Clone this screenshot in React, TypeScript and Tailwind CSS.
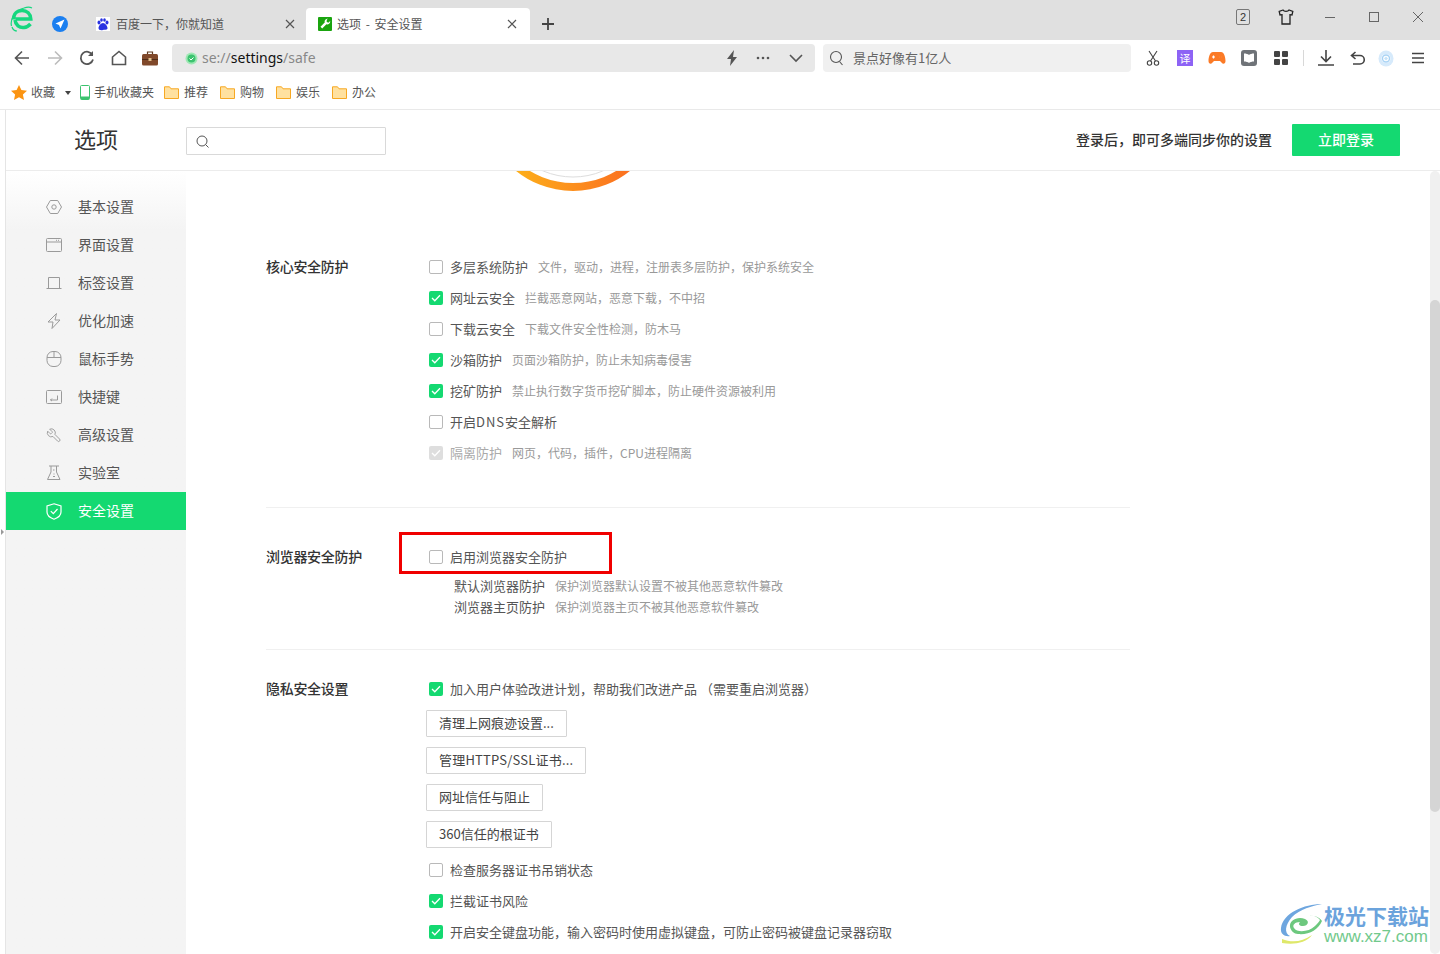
import React from "react";

const GREEN = "bg-[#14d971]";

function Check({ state }: { state: "off" | "on" | "dis" }) {
  if (state === "off")
    return <span className="block w-[14px] h-[14px] shrink-0 rounded-[2px] border border-[#b9b9b9] bg-white" />;
  return (
    <span className={`flex items-center justify-center w-[14px] h-[14px] shrink-0 rounded-[2px] ${state === "on" ? GREEN : "bg-[#dedede]"}`}>
      <svg width="10" height="8" viewBox="0 0 10 8" fill="none">
        <path d="M1 4 L3.8 6.8 L9 1.2" stroke="white" strokeWidth="1.3" />
      </svg>
    </span>
  );
}

function Row({ state, label, desc, dim }: { state: "off" | "on" | "dis"; label: React.ReactNode; desc?: string; dim?: boolean }) {
  return (
    <div className="flex items-center h-[31px]">
      <div className="w-[21px] pb-[1px] flex justify-start"><Check state={state} /></div>
      <span className={`pb-[2px] text-[13px] whitespace-nowrap ${dim ? "text-[#aaaaaa]" : "text-[#555555]"}`}>{label}</span>
      {desc && <span className="pb-[2px] ml-[10px] text-[12px] whitespace-nowrap text-[#999999]">{desc}</span>}
    </div>
  );
}

function Btn({ children }: { children: React.ReactNode }) {
  return (
    <div className="flex items-center w-fit h-[27px] px-[12px] pb-[2px] border border-[#d5d5d5] rounded-[1px] text-[13px] text-[#444444] whitespace-nowrap bg-white mb-[10px] -ml-[3px]">
      {children}
    </div>
  );
}

function SectionLabel({ children }: { children: React.ReactNode }) {
  return (
    <div className="w-[163px] shrink-0 h-[31px] flex items-center pb-[2px] text-[14px] tracking-[-0.3px] font-medium text-[#333333]">
      {children}
    </div>
  );
}

const S = { fill: "none", stroke: "#9a9a9a", strokeWidth: 1 };

const sideIcons: Record<string, React.ReactNode> = {
  a: <svg width="16" height="16" viewBox="0 0 16 16" {...S}><path d="M4.3 1.500h7.400L15.500 8l-3.800 6.500H4.300L.5 8z" /><circle cx="8" cy="8" r="2.200" /></svg>,
  b: <svg width="16" height="16" viewBox="0 0 16 16" {...S}><rect x=".5" y="1.500" width="15" height="13" rx="1" /><path d="M.5 5h15M10 3.300h1M12 3.300h1" /></svg>,
  c: <svg width="16" height="16" viewBox="0 0 16 16" {...S}><path d="M2.500 13V2.500h11V13M.5 13.500h15" /></svg>,
  d: <svg width="16" height="16" viewBox="0 0 16 16" {...S}><path d="M10.500 .5 2 9h5l-1 6.500L14 7H9z" /></svg>,
  e: <svg width="16" height="16" viewBox="0 0 16 16" {...S}><rect x="1" y=".5" width="14" height="15" rx="6" /><path d="M1 6.500h14M8 .5v6" /></svg>,
  f: <svg width="16" height="16" viewBox="0 0 16 16" {...S}><rect x=".5" y="1.500" width="15" height="13" rx="1" /><path d="M11.500 6.500v4.500H4.500M6 9.500 4.500 11 6 12" /></svg>,
  g: (
    <svg width="17" height="17" viewBox="0 0 24 24" fill="none" stroke="#9a9a9a" strokeWidth="1.400">
      <path transform="translate(24 0) scale(-1 1)" d="M14.700 6.300a1 1 0 0 0 0 1.400l1.600 1.600a1 1 0 0 0 1.400 0l3.770-3.770a6 6 0 0 1-7.940 7.940l-6.910 6.910a2.120 2.120 0 0 1-3-3l6.910-6.910a6 6 0 0 1 7.940-7.940l-3.760 3.760z" />
    </svg>
  ),
  h: <svg width="16" height="16" viewBox="0 0 16 16" {...S}><path d="M3 1h10M5 1v6L1.500 14.500h12.500L10.500 7V1M7 5h1.500M7.500 9h1M7 11.500h2" /></svg>,
  i: <svg width="16" height="17" viewBox="0 0 16 17" fill="none" stroke="white" strokeWidth="1.200"><path d="M8 .8 15 3v6c0 3.500-3.500 6-7 7.200C4.500 15 1 12.500 1 9V3z" /><path d="M4.800 8.200 7.300 10.700 11.500 6" /></svg>,
};

const sideItems: [string, string][] = [
  ["a", "基本设置"], ["b", "界面设置"], ["c", "标签设置"], ["d", "优化加速"], ["e", "鼠标手势"],
  ["f", "快捷键"], ["g", "高级设置"], ["h", "实验室"], ["i", "安全设置"],
];

function Folder() {
  return (
    <svg width="15" height="13" viewBox="0 0 15 13" className="shrink-0">
      <path d="M.5 12.500V.8h5l1.500 2h7.500v9.700z" fill="#ffe1a0" stroke="#f7a823" />
    </svg>
  );
}

function Bookmark({ label }: { label: string }) {
  return (
    <div className="flex items-center gap-[5px] w-[56px]">
      <Folder />
      <span className="pb-[2px] text-[12px] text-[#555555]">{label}</span>
    </div>
  );
}

const dk = { fill: "none", stroke: "#555555", strokeWidth: 1.6 };

export default function App() {
  return (
    <div className="relative w-[1440px] h-[954px] overflow-hidden bg-white font-['Noto_Sans_CJK_SC','Noto_Sans',sans-serif] flex flex-col">
      {/* Tab strip */}
      <div className="h-[40px] shrink-0 bg-[#e0e0e0] flex items-end">
        <div className="w-[80px] h-full relative flex items-center shrink-0">
          <svg width="24" height="26" viewBox="0 0 24 26" className="ml-[10px] mb-[3px]">
            <path d="M3.500 13.500C3.500 8 7 4.500 12 4.500c5 0 8.500 3.500 8.800 8.500H5.500" fill="none" stroke="#16d77f" strokeWidth="3.500" />
            <path d="M5 14c.5 5 4.500 8 9 7.500 3-.3 5-1.800 6.500-3.500" fill="none" stroke="#16d77f" strokeWidth="3.500" />
            <path d="M1.500 20C0 14 4 5 14 2c3-1 6-1 8 0" fill="none" stroke="#16d77f" strokeWidth="1.200" />
            <path d="M2 21c1 3 3 4 5 4" fill="none" stroke="#16d77f" strokeWidth="1.200" />
          </svg>
          <svg width="16" height="16" viewBox="0 0 16 16" className="ml-[18px] mt-[8px] shrink-0">
            <circle cx="8" cy="8" r="8" fill="#1b7ff0" />
            <path d="M12.500 3.500 3.500 7.500 7 9l1.500 3.500z" fill="white" />
          </svg>
        </div>
        <div className="w-[226px] h-[32px] flex items-center pl-[16px] relative">
          <svg width="14" height="14" viewBox="0 0 14 14" className="shrink-0">
            <rect width="14" height="14" fill="white" />
            <g fill="#2932e1">
              <ellipse cx="3" cy="5.500" rx="1.500" ry="2" /><ellipse cx="5.500" cy="3" rx="1.300" ry="1.800" />
              <ellipse cx="8.500" cy="3" rx="1.300" ry="1.800" /><ellipse cx="11" cy="5.500" rx="1.500" ry="2" />
              <path d="M7 6c-2 0-4.500 3-4.500 5 0 2 2 2.500 4.500 2s4.500 0 4.500-2c0-2-2.500-5-4.500-5z" />
            </g>
          </svg>
          <span className="ml-[6px] text-[12px] text-[#555555] whitespace-nowrap">百度一下，你就知道</span>
          <svg width="10" height="10" viewBox="0 0 10 10" className="ml-auto mr-[11px]"><path d="M1 1l8 8M9 1l-8 8" stroke="#555555" strokeWidth="1.200" /></svg>
        </div>
        <div className="w-[224px] h-[32px] bg-white rounded-t-[4px] flex items-center pl-[12px]">
          <svg width="14" height="14" viewBox="0 0 14 14" className="shrink-0">
            <rect width="14" height="14" rx="1" fill="#1aa40f" />
            <path d="M10 1.800a3 3 0 0 0-3.300 3.800L2.500 9.800 4.200 11.500l4.200-4.200a3 3 0 0 0 3.800-3.300L10.300 5.800 8.600 4.700l.300-2.300z" fill="white" />
          </svg>
          <span className="ml-[5px] text-[12px] text-[#555555] whitespace-nowrap [word-spacing:2px]">选项 - 安全设置</span>
          <svg width="10" height="10" viewBox="0 0 10 10" className="ml-auto mr-[13px]"><path d="M1 1l8 8M9 1l-8 8" stroke="#555555" strokeWidth="1.200" /></svg>
        </div>
        <div className="h-[32px] flex items-center ml-[11px]">
          <svg width="14" height="14" viewBox="0 0 14 14"><path d="M7 1v12M1 7h12" stroke="#444444" strokeWidth="1.800" /></svg>
        </div>
        <div className="ml-auto h-full flex items-center pb-[6px]">
          <div className="w-[14px] h-[16px] border border-[#777777] rounded-[2px] flex items-center justify-center text-[11px] leading-none text-[#333333] font-['Liberation_Sans',sans-serif]">2</div>
          <svg width="16" height="16" viewBox="0 0 16 16" className="ml-[28px]"><path d="M5 1 1.200 2.500l.8 3.500 2-.3V15h8V5.700l2 .3.800-3.500L11 1c-1 1.800-5 1.800-6 0z" fill="none" stroke="#222222" strokeWidth="1.300" /></svg>
          <svg width="10" height="10" viewBox="0 0 10 10" className="ml-[31px]"><path d="M0 5.500h10" stroke="#666666" /></svg>
          <svg width="10" height="10" viewBox="0 0 10 10" className="ml-[34px]"><rect x=".5" y=".5" width="9" height="9" fill="none" stroke="#666666" /></svg>
          <svg width="12" height="12" viewBox="0 0 12 12" className="ml-[33px] mr-[16px]"><path d="M1 1l10 10M11 1 1 11" stroke="#666666" /></svg>
        </div>
      </div>

      {/* Toolbar */}
      <div className="h-[36px] shrink-0 bg-white flex items-center">
        <div className="w-[172px] shrink-0 flex items-center pl-[14px]">
          <svg width="16" height="16" viewBox="0 0 16 16" {...dk}><path d="M15 8H1.500M8 1.500 1.500 8 8 14.500" /></svg>
          <svg width="16" height="16" viewBox="0 0 16 16" className="ml-[17px]" fill="none" stroke="#bcbcbc" strokeWidth="1.600"><path d="M1 8h13.500M8 1.500 14.500 8 8 14.500" /></svg>
          <svg width="16" height="16" viewBox="0 0 16 16" className="ml-[16px]" {...dk} strokeWidth="1.800"><path d="M13.500 5A6.200 6.200 0 1 0 14 9.500" /><path d="M14 1v5H9" fill="#555555" stroke="none" /></svg>
          <svg width="16" height="16" viewBox="0 0 16 16" className="ml-[16px]" {...dk}><path d="M1.500 14.500V7L8 1.500 14.500 7v7.500z" /></svg>
          <svg width="16" height="15" viewBox="0 0 16 15" className="ml-[15px]">
            <path d="M5.500 3V1h5v2" fill="none" stroke="#5d3a20" strokeWidth="1.200" />
            <rect y="3" width="16" height="11.500" rx="1.500" fill="#80492a" />
            <rect y="8" width="16" height="1" fill="#4d2c18" />
            <rect x="6.500" y="7" width="3" height="3" fill="#e2c08c" />
          </svg>
        </div>
        <div className="w-[643px] h-[28px] bg-[#e8e8e8] rounded-[4px] flex items-center pl-[13px] pr-[12px]">
          <svg width="13" height="13" viewBox="0 0 13 13" className="shrink-0">
            <circle cx="6.500" cy="6.500" r="6" fill="#9ee8b4" /><circle cx="6.500" cy="6.500" r="4" fill="#3cc36f" />
            <path d="M4.500 6.500l1.500 1.500 2.500-2.500" fill="none" stroke="white" />
          </svg>
          <span className="ml-[4px] pb-[1px] text-[14px] leading-none text-[#888888] whitespace-nowrap font-['Noto_Sans',sans-serif]">se://<span className="text-[#111111]">settings</span>/safe</span>
          <svg width="12" height="16" viewBox="0 0 12 16" className="ml-auto"><path d="M8 0 1 9h4l-1 7 7-9H7z" fill="#555555" /></svg>
          <svg width="14" height="4" viewBox="0 0 14 4" className="ml-[18px]"><g fill="#555555"><circle cx="2" cy="2" r="1.300" /><circle cx="7" cy="2" r="1.300" /><circle cx="12" cy="2" r="1.300" /></g></svg>
          <svg width="14" height="9" viewBox="0 0 14 9" className="ml-[19px]" {...dk}><path d="M1 1l6 6 6-6" /></svg>
        </div>
        <div className="ml-[8px] w-[308px] h-[28px] bg-[#f0f0f0] rounded-[4px] flex items-center pl-[6px]">
          <svg width="15" height="16" viewBox="0 0 15 16" fill="none" stroke="#555555" strokeWidth="1.100"><circle cx="7" cy="7" r="5.500" /><path d="M10.500 11.500l3 3.500" /></svg>
          <span className="ml-[9px] text-[13px] text-[#666666] whitespace-nowrap">景点好像有1亿人</span>
        </div>
        <div className="flex items-center ml-[15px]">
          <svg width="14" height="16" viewBox="0 0 14 16" fill="none" stroke="#444444" strokeWidth="1.100"><path d="M3 1l6.500 10M11 1 4.500 11" /><circle cx="3.500" cy="13" r="2.200" /><circle cx="10.500" cy="13" r="2.200" /></svg>
          <div className="ml-[17px] w-[16px] h-[16px] bg-[#8d63f5] flex items-center justify-center text-[11px] leading-none text-white">译</div>
          <svg width="18" height="14" viewBox="0 0 18 14" className="ml-[15px]"><path d="M5 1h8c3 0 4.500 5 4.500 9 0 3-2.500 3.500-4 1.500L12 10H6l-1.500 1.500C3 13.500.5 13 .5 10 .5 6 2 1 5 1z" fill="#fb7a26" /><path d="M4 6h3M5.500 4.500v3M11 6h.1M13.500 6h.1" stroke="white" strokeWidth="1.200" /></svg>
          <svg width="16" height="16" viewBox="0 0 16 16" className="ml-[15px]"><rect width="16" height="16" rx="3" fill="#6f7378" /><path d="M3 3.500c2 0 4 .5 5 1.500 1-1 3-1.500 5-1.500v8c-2 0-4 .5-5 1.500-1-1-3-1.500-5-1.500z" fill="white" /></svg>
          <div className="ml-[17px] grid grid-cols-2 gap-[2px]">
            <span className="w-[6px] h-[6px] bg-[#444444] rounded-[1px]" /><span className="w-[6px] h-[6px] bg-[#444444] rounded-[1px]" />
            <span className="w-[6px] h-[6px] bg-[#444444] rounded-[1px]" /><span className="w-[6px] h-[6px] bg-[#444444] rounded-[1px]" />
          </div>
          <span className="ml-[15px] w-px h-[16px] bg-[#d8d8d8]" />
          <svg width="16" height="16" viewBox="0 0 16 16" className="ml-[14px]" {...dk} stroke="#444444"><path d="M8 0v11M3 6.500 8 11.500l5-5M0 15h16" /></svg>
          <svg width="15" height="15" viewBox="0 0 15 15" className="ml-[16px]" {...dk} stroke="#444444"><path d="M5.500 1 1.500 4.500 5.500 8M2 4.500h8a4 4 0 0 1 0 8.500H3" /></svg>
          <svg width="16" height="17" viewBox="0 0 16 17" className="ml-[13px]"><ellipse cx="8" cy="8.500" rx="7.500" ry="8" fill="#d6eafb" /><circle cx="8" cy="8.500" r="4.500" fill="white" /><circle cx="8" cy="8.500" r="3.500" fill="none" stroke="#a8d3f5" strokeWidth="1.400" /><path d="M6 8.500 8 6.500l2 2-2 2z" fill="#c5e2f8" /></svg>
          <svg width="12" height="12" viewBox="0 0 12 12" className="ml-[18px]" stroke="#444444" strokeWidth="1.700"><path d="M0 1.500h12M0 6h12M0 10.500h12" /></svg>
        </div>
      </div>

      {/* Bookmarks */}
      <div className="h-[34px] shrink-0 bg-white border-b border-[#e9e9e9] flex items-center pl-[11px]">
        <svg width="16" height="15" viewBox="0 0 16 15" className="shrink-0"><path d="M8 0l2.400 5 5.600.700-4.100 3.800 1.100 5.500L8 12.300 3 15l1.100-5.500L0 5.700 5.600 5z" fill="#fb9412" /></svg>
        <span className="ml-[4px] pb-[2px] text-[12px] text-[#555555]">收藏</span>
        <span className="ml-[10px] w-0 h-0 border-x-[3px] border-x-transparent border-t-[4px] border-t-[#444444]" />
        <svg width="10" height="15" viewBox="0 0 10 15" className="ml-[9px] shrink-0"><rect x=".5" y=".5" width="9" height="14" rx="1" fill="#ffffff" stroke="#3cc36f" /><rect x="1" y="11.500" width="8" height="3" fill="#3cc36f" /></svg>
        <span className="ml-[4px] pb-[2px] w-[70px] shrink-0 text-[12px] text-[#555555] whitespace-nowrap">手机收藏夹</span>
        <Bookmark label="推荐" />
        <Bookmark label="购物" />
        <Bookmark label="娱乐" />
        <Bookmark label="办公" />
      </div>

      {/* Page */}
      <div className="flex-1 min-h-0 flex relative">
        <div className="w-[6px] shrink-0 border-r border-[#e5e5e5] bg-white relative">
          <span className="absolute left-[1px] top-[419px] w-0 h-0 border-y-[3px] border-y-transparent border-l-[3px] border-l-[#999999]" />
        </div>
        <div className="flex-1 min-w-0 flex flex-col">
          {/* Header */}
          <div className="h-[61px] shrink-0 border-b border-[#ececec] flex items-center">
            <div className="w-[180px] shrink-0 pl-[68px] pb-[5px] text-[22px] text-[#333333] leading-none">选项</div>
            <div className="w-[200px] h-[28px] mt-[2px] border border-[#d9d9d9] rounded-[1px] flex items-center pl-[9px]">
              <svg width="13" height="13" viewBox="0 0 13 13" fill="none" stroke="#555555" strokeWidth="1"><circle cx="6" cy="6" r="5" /><path d="M9.500 9.500l3 3" /></svg>
            </div>
            <span className="ml-auto pb-[1px] text-[14px] font-medium text-[#333333] whitespace-nowrap">登录后，即可多端同步你的设置</span>
            <div className={`ml-[20px] mr-[40px] mb-[1px] w-[108px] h-[32px] ${GREEN} rounded-[1px] flex items-center justify-center pb-[1px] text-[14px] font-medium text-white`}>立即登录</div>
          </div>

          <div className="flex-1 min-h-0 flex">
            {/* Sidebar */}
            <div className="w-[180px] shrink-0 bg-gradient-to-b from-white to-[#f4f4f4] to-[60px] pt-[17px]">
              {sideItems.map(([k, t]) => {
                const on = k === "i";
                return (
                  <div key={k} className={`h-[38px] flex items-center pl-[40px] ${on ? GREEN : ""}`}>
                    <span className="w-[16px] flex justify-center">{sideIcons[k]}</span>
                    <span className={`ml-[16px] pb-[2px] text-[14px] ${on ? "text-white" : "text-[#555555]"}`}>{t}</span>
                  </div>
                );
              })}
            </div>

            {/* Main */}
            <div className="flex-1 min-w-0 flex">
              <div className="w-[1244px] shrink-0 overflow-hidden pl-[80px]">
                <div className="w-[864px] relative">
                  <svg width="200" height="20" viewBox="0 0 200 20" className="block ml-[207px]">
                    <circle cx="100" cy="-71" r="77" fill="none" stroke="#dddddd" strokeWidth="1" />
                    <circle cx="100" cy="-71" r="87" fill="none" stroke="url(#arc)" strokeWidth="8" />
                    <defs>
                      <linearGradient id="arc" x1="40" y1="0" x2="160" y2="0" gradientUnits="userSpaceOnUse">
                        <stop offset="0" stopColor="#fdb01a" /><stop offset="1" stopColor="#fb6e20" />
                      </linearGradient>
                    </defs>
                  </svg>

                  <div className="flex pt-[61px] pb-[38px] border-b border-[#f0f0f0]">
                    <SectionLabel>核心安全防护</SectionLabel>
                    <div>
                      <Row state="off" label="多层系统防护" desc="文件，驱动，进程，注册表多层防护，保护系统安全" />
                      <Row state="on" label="网址云安全" desc="拦截恶意网站，恶意下载，不中招" />
                      <Row state="off" label="下载云安全" desc="下载文件安全性检测，防木马" />
                      <Row state="on" label="沙箱防护" desc="页面沙箱防护，防止未知病毒侵害" />
                      <Row state="on" label="挖矿防护" desc="禁止执行数字货币挖矿脚本，防止硬件资源被利用" />
                      <Row state="off" label={<>开启<span className="tracking-[1px]">DNS</span>安全解析</>} />
                      <Row state="dis" label="隔离防护" desc="网页，代码，插件，CPU进程隔离" dim />
                    </div>
                  </div>

                  <div className="flex pt-[34px] pb-[32px] border-b border-[#f0f0f0]">
                    <SectionLabel>浏览器安全防护</SectionLabel>
                    <div>
                      <Row state="off" label="启用浏览器安全防护" />
                      <div className="pl-[25px] pt-[2px]">
                        <div className="h-[21px] flex items-center whitespace-nowrap"><span className="text-[13px] text-[#555555]">默认浏览器防护</span><span className="ml-[10px] text-[12px] text-[#999999]">保护浏览器默认设置不被其他恶意软件篡改</span></div>
                        <div className="h-[21px] flex items-center whitespace-nowrap"><span className="text-[13px] text-[#555555]">浏览器主页防护</span><span className="ml-[10px] text-[12px] text-[#999999]">保护浏览器主页不被其他恶意软件篡改</span></div>
                      </div>
                    </div>
                  </div>

                  <div className="flex pt-[24px]">
                    <SectionLabel>隐私安全设置</SectionLabel>
                    <div>
                      <Row state="on" label="加入用户体验改进计划，帮助我们改进产品 （需要重启浏览器）" />
                      <div className="pt-[5px] mb-[-3px]">
                        <Btn>清理上网痕迹设置...</Btn>
                        <Btn><span className="tracking-[0.2px]">管理HTTPS/SSL证书...</span></Btn>
                        <Btn>网址信任与阻止</Btn>
                        <Btn>360信任的根证书</Btn>
                      </div>
                      <Row state="off" label="检查服务器证书吊销状态" />
                      <Row state="on" label="拦截证书风险" />
                      <Row state="on" label="开启安全键盘功能，输入密码时使用虚拟键盘，可防止密码被键盘记录器窃取" />
                    </div>
                  </div>

                  {/* red highlight */}
                  <div className="absolute left-[133px] top-[361px] w-[213px] h-[42px] border-[3px] border-[#f00000]" />
                </div>
              </div>
              {/* Scrollbar */}
              <div className="w-[10px] shrink-0 ml-auto bg-[#f0f0f0] rounded-[5px] relative">
                <div className="absolute left-0 top-[129px] w-[10px] h-[512px] bg-[#d5d5d5] rounded-[5px]" />
              </div>
            </div>
          </div>
        </div>
      </div>

      {/* Watermark */}
      <div className="absolute left-[1280px] top-[903px] flex items-start">
        <svg width="44" height="42" viewBox="0 0 44 42" className="shrink-0">
          <path d="M42 1C24 1 3 10 1 25c-1 6 4 9 9 8C4 30 5 22 12 14 20 6 32 3 42 1z" fill="#6ea6df" />
          <path d="M10 24c-1-7 8-11 15-8 5 2 3 7-2 7-4 0-5-2-3-4-5 0-8 3-6 6 3 5 15 4 21-2 2-2 4-4 5-6-3-5-12-6-18-5 8-1 17 1 20 6-4 9-13 14-24 13-4 0-7-3-8-7z" fill="#6dc87e" />
          <path d="M2 36c10 4 20 3 30-4-6 8-18 10-30 8z" fill="#dfe86a" />
        </svg>
        <div className="flex flex-col">
          <span className="text-[21px] leading-[24px] font-bold text-[#6ba3dc] whitespace-nowrap">极光下载站</span>
          <span className="text-[17px] leading-[19px] text-[#72c98c] whitespace-nowrap font-['Liberation_Sans',sans-serif]">www.xz7.com</span>
        </div>
      </div>
    </div>
  );
}
